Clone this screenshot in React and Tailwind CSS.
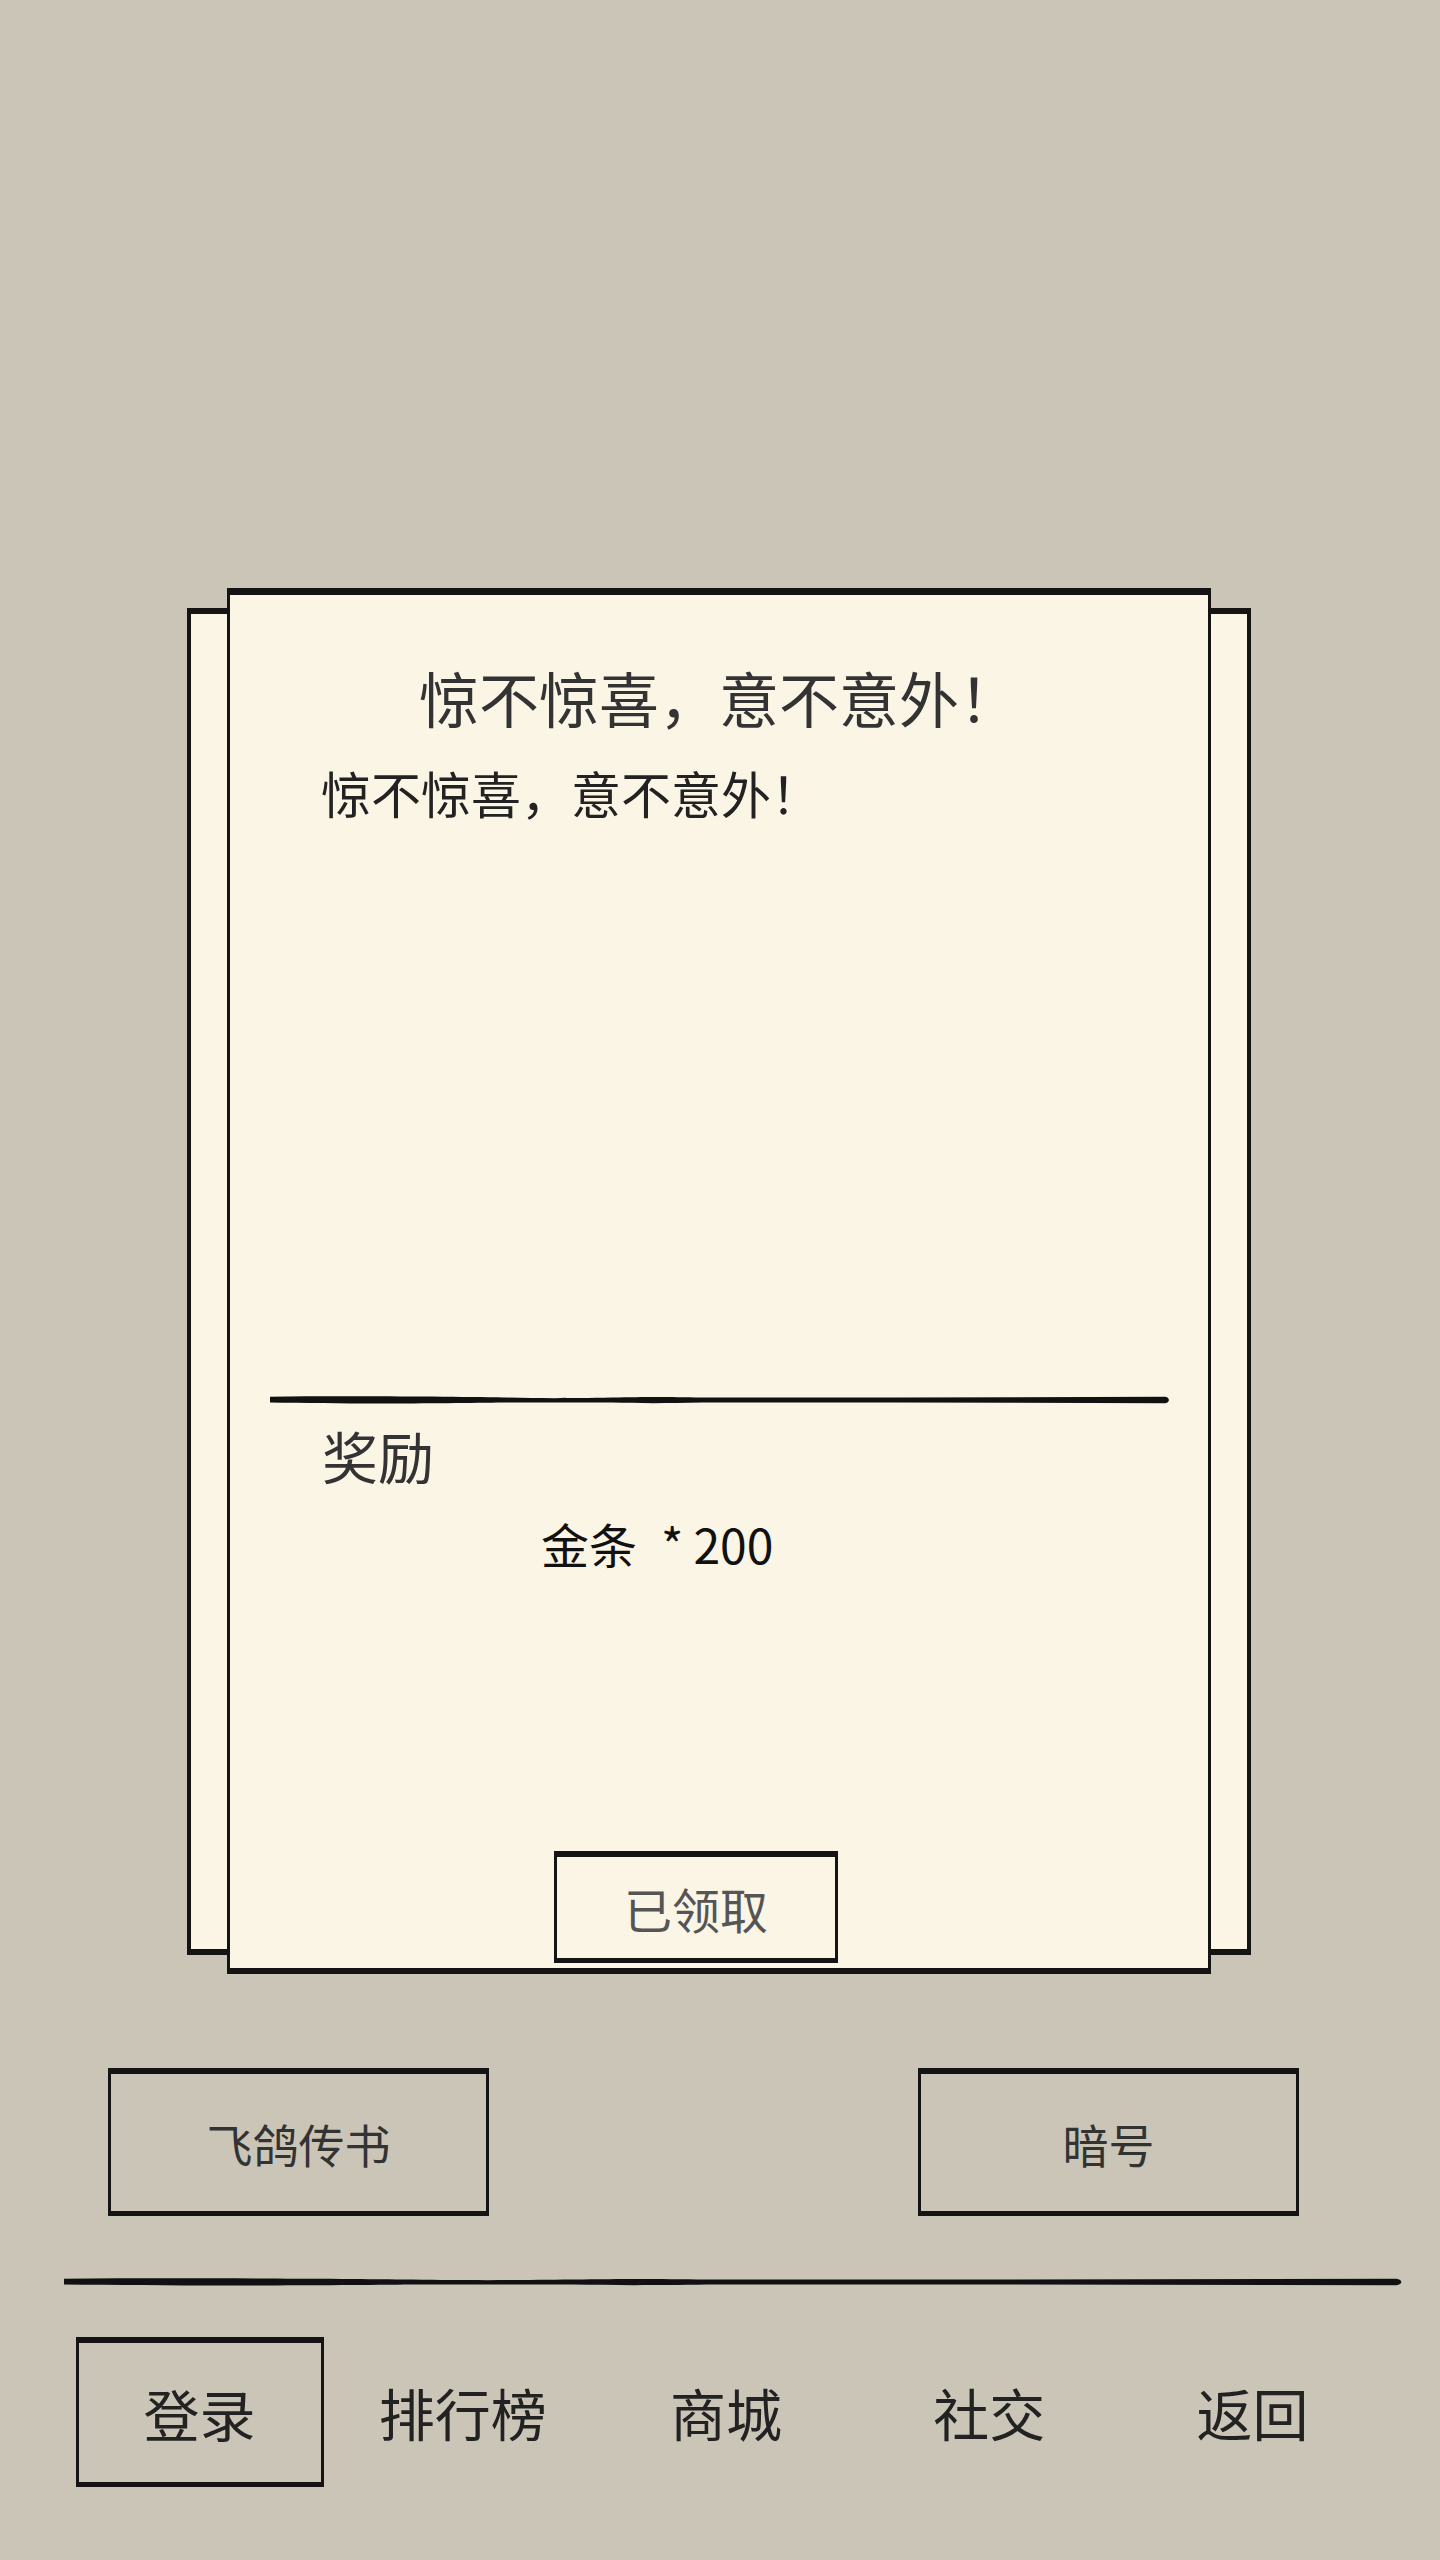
import React from 'react';

const FONT = "font-['Noto_Sans_CJK_SC','Noto_Sans',sans-serif]";

// tapered ink stroke used for the dividers
const BrushLine = ({ className }) => (
  <svg viewBox="0 0 1000 12" preserveAspectRatio="none" className={className}>
    <path
      d="M0 2 C 90 1, 200 2, 260 3 C 300 4, 330 4, 380 3 C 420 2, 440 2, 480 3 L 700 3 L 995 2 C 1000 3, 1000 9, 995 10 L 700 9 L 480 9 C 440 10, 410 10, 380 9 C 330 9, 300 9, 260 9 C 200 10, 90 11, 0 9 Z"
      fill="#111"
    />
  </svg>
);

const SketchBox = ({ className = '', children }) => (
  <div
    className={`flex items-center justify-center border-x-[3px] border-t-[6px] border-b-[5px] border-[#141414] ${className}`}
  >
    {children}
  </div>
);

const tabs = ['登录', '排行榜', '商城', '社交', '返回'];

export default function App() {
  return (
    <div className={`w-[1440px] h-[2560px] bg-[#cbc5b8] flex flex-col items-start ${FONT}`}>
      {/* letter */}
      <div className="relative ml-[227px] mt-[588px] w-[984px] h-[1386px]">
        <div className="absolute -left-[40px] -right-[40px] top-[20px] bottom-[19px] bg-[#fbf5e6] border-x-[4px] border-y-[6px] border-[#141414]" />
        <div className="relative h-full flex flex-col items-start bg-[#fbf5e6] border-x-[3px] border-t-[7px] border-b-[6px] border-[#141414]">
          <h1 className="mt-[72px] w-full text-center text-[60px] leading-none font-normal text-[#333]">
            惊不惊喜，意不意外！
          </h1>
          <p className="mt-[40px] ml-[91px] text-[50px] leading-none text-[#222]">惊不惊喜，意不意外！</p>

          <BrushLine className="mt-[578px] ml-[40px] w-[900px] h-[10px]" />

          <p className="mt-[22px] ml-[92px] text-[56px] leading-none text-[#333]">奖励</p>
          <p className="mt-[36px] ml-[311px] text-[48px] leading-none text-[#111]">
            金条<span className="ml-[24px]">*</span>
            <span className="ml-[10px]">200</span>
          </p>

          <SketchBox className="mt-auto mb-[5px] ml-[324px] w-[284px] h-[112px]">
            <span className="text-[48px] leading-none text-[#555]">已领取</span>
          </SketchBox>
        </div>
      </div>

      {/* side actions */}
      <div className="mt-[94px] ml-[108px] flex gap-[429px]">
        <SketchBox className="w-[381px] h-[148px]">
          <span className="text-[46px] leading-none text-[#333]">飞鸽传书</span>
        </SketchBox>
        <SketchBox className="w-[381px] h-[148px]">
          <span className="text-[46px] leading-none text-[#333]">暗号</span>
        </SketchBox>
      </div>

      <BrushLine className="mt-[61px] ml-[64px] w-[1339px] h-[10px]" />

      {/* bottom tabs */}
      <nav className="mt-[50px] ml-[68px] grid grid-cols-5 w-[1316px]">
        {tabs.map((t, i) =>
          i === 0 ? (
            <SketchBox key={t} className="mx-auto w-[248px] h-[150px]">
              <span className="text-[56px] leading-none text-[#222]">{t}</span>
            </SketchBox>
          ) : (
            <div key={t} className="flex items-center justify-center h-[150px]">
              <span className="text-[56px] leading-none text-[#222]">{t}</span>
            </div>
          )
        )}
      </nav>
    </div>
  );
}
